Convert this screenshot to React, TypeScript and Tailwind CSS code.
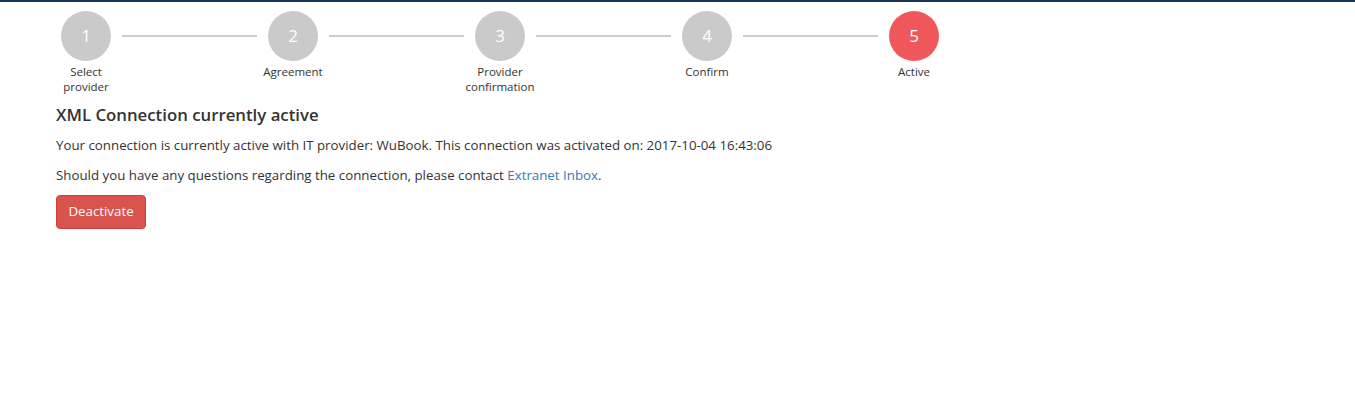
import React from 'react';

const steps = [
  { n: 1, label: 'Select provider' },
  { n: 2, label: 'Agreement' },
  { n: 3, label: 'Provider confirmation' },
  { n: 4, label: 'Confirm' },
  { n: 5, label: 'Active' },
];

export default function App() {
  return (
    <main
      className="min-h-[414px] w-[1355px] bg-white border-t-2 border-[#1b3558] text-[#333]"
      style={{ fontFamily: '"Open Sans", "Noto Sans", Arial, sans-serif' }}
    >
      {/* stepper */}
      <div className="flex pl-[51px] pt-[9px]">
        {steps.map((s, i) => (
          <React.Fragment key={s.n}>
            <div className="flex w-[70px] flex-col items-center">
              <div
                className={
                  s.n === 5
                    ? 'flex h-[50px] w-[50px] items-center justify-center rounded-full bg-[#f0575b] text-[17px] text-white'
                    : 'flex h-[50px] w-[50px] items-center justify-center rounded-full bg-[#cacaca] text-[17px] text-white'
                }
              >
                {s.n}
              </div>
              <div className="mt-[3px] text-center text-[11.5px] leading-[15px] text-[#333]">
                {s.label}
              </div>
            </div>
            {i < steps.length - 1 && (
              <div className="w-[137px]">
                <div className="mx-[1px] mt-[24px] h-[2px] bg-[#cccccc]" />
              </div>
            )}
          </React.Fragment>
        ))}
      </div>

      <div className="px-[56px] pt-[9px]">
        <h3 className="text-[16.8px] font-semibold leading-[24px] text-[#333]">
          XML Connection currently active
        </h3>
        <p className="mt-[9px] text-[13.3px] leading-[18px]">
          Your connection is currently active with IT provider: WuBook. This connection was
          activated on: 2017-10-04 16:43:06
        </p>
        <p className="mt-[12px] text-[13.3px] leading-[18px]">
          Should you have any questions regarding the connection, please contact{' '}
          <a href="#" className="text-[#337ab7]">
            Extranet Inbox
          </a>
          .
        </p>
        <button
          type="button"
          className="mt-[11px] h-[34px] w-[90px] rounded-[4px] border border-[#d43f3a] bg-[#d9534f] text-[13.3px] text-white"
        >
          Deactivate
        </button>
      </div>
    </main>
  );
}
